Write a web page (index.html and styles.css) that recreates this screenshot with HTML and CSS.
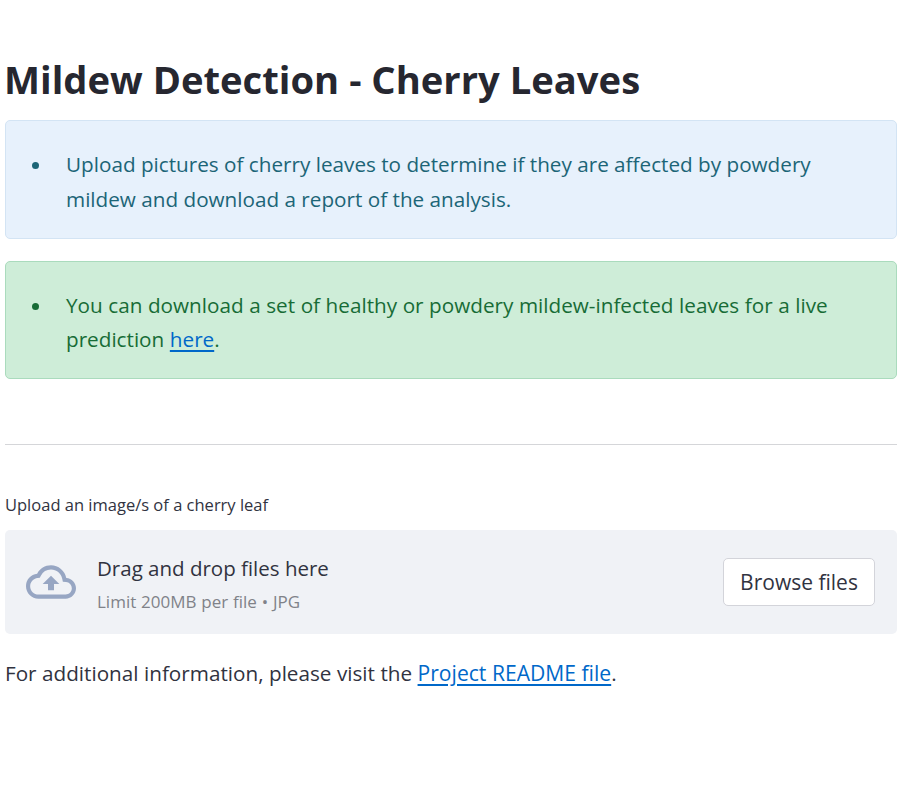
FILE: index.html
```html
<!DOCTYPE html>
<html lang="en">
<head>
<meta charset="utf-8">
<title>Mildew Detection</title>
<link rel="stylesheet" href="styles.css">
</head>
<body>
<main class="page">
  <h1 class="title">Mildew Detection - Cherry Leaves</h1>
  <section class="alert info">
    <ul><li>Upload pictures of cherry leaves to determine if they are affected by powdery<br>mildew and download a report of the analysis.</li></ul>
  </section>
  <section class="alert success">
    <ul><li>You can download a set of healthy or powdery mildew-infected leaves for a live<br>prediction <a href="#">here</a>.</li></ul>
  </section>
  <hr class="divider">
  <div class="label">Upload an image/s of a cherry leaf</div>
  <section class="dropzone">
    <svg class="cloud" viewBox="0 0 24 24" aria-hidden="true"><path d="M19.35 10.04A7.49 7.49 0 0 0 12 4C9.11 4 6.6 5.64 5.35 8.04A5.994 5.994 0 0 0 0 14c0 3.31 2.69 6 6 6h13c2.76 0 5-2.24 5-5 0-2.64-2.05-4.78-4.65-4.96zM19 18H6c-2.21 0-4-1.79-4-4 0-2.05 1.53-3.76 3.56-3.97l1.07-.11.5-.95A5.469 5.469 0 0 1 12 6c2.62 0 4.88 1.86 5.39 4.43l.3 1.5 1.53.11A2.98 2.98 0 0 1 22 15c0 1.65-1.35 3-3 3zM8 13h2.55v3h2.9v-3H16l-4-4-4 4z"/></svg>
    <div class="hint">
      <span class="drag">Drag and drop files here</span>
      <small class="limit">Limit 200MB per file • JPG</small>
    </div>
    <button class="browse" type="button">Browse files</button>
  </section>
  <p class="footer">For additional information, please visit the <a href="#">Project README file</a>.</p>
</main>
</body>
</html>
```
FILE: styles.css
```css
* { box-sizing: border-box; }
body {
  margin: 0;
  background: #fff;
  color: #31333f;
  font: 20.7px/34.4px "Open Sans", sans-serif;
}
.page { width: 897px; padding: 53px 0 0 5px; }
.title {
  margin: 0 0 15px -1px;
  font-size: 38.2px;
  line-height: 52px;
  font-weight: 700;
  color: #262730;
  white-space: nowrap;
}
.alert {
  height: 119px;
  margin-bottom: 22px;
  padding: 26px 0 0 60px;
  border: 1px solid #d3e4f4;
  border-radius: 5px;
  white-space: nowrap;
}
.alert ul { margin: 0; padding: 0; list-style: none; }
.alert li::before {
  content: "";
  float: left;
  width: 7px;
  height: 7px;
  margin: 15px 0 0 -34px;
  border-radius: 50%;
  background: currentColor;
}
.info { background: #e7f1fc; color: #1c6577; line-height: 35px; }
.success { height: 118px; background: #ceedd8; border-color: #aadbbd; color: #176c36; }
.success li { word-spacing: 0.2px; }
a { color: #0068c9; text-decoration: underline; text-decoration-thickness: 2px; text-underline-offset: 3px; }
.divider { height: 1px; margin: 65px 0 47px; border: 0; background: #d5d6d9; }
.label { font-size: 16.5px; line-height: 25px; margin-bottom: 13px; }
.dropzone {
  display: flex;
  align-items: center;
  height: 104px;
  padding: 0 22px 0 21px;
  border-radius: 5px;
  background: #f0f2f6;
}
.cloud { width: 50px; height: 50px; margin-right: 21px; fill: #97a6c3; }
.hint { display: flex; flex-direction: column; flex: 1; padding-top: 5px; white-space: nowrap; }
.drag { font-size: 20.5px; }
.limit { font-size: 17px; line-height: 32px; word-spacing: 0.4px; color: #808289; }
.browse {
  width: 152px;
  height: 48px;
  padding: 0;
  border: 1px solid #d3d4da;
  border-radius: 5px;
  background: #fff;
  color: #31333f;
  font: inherit;
  font-size: 21px;
}
.footer { margin: 22px 0 0; word-spacing: 0.1px; white-space: nowrap; }
.footer a { font-size: 21.1px; }
```
